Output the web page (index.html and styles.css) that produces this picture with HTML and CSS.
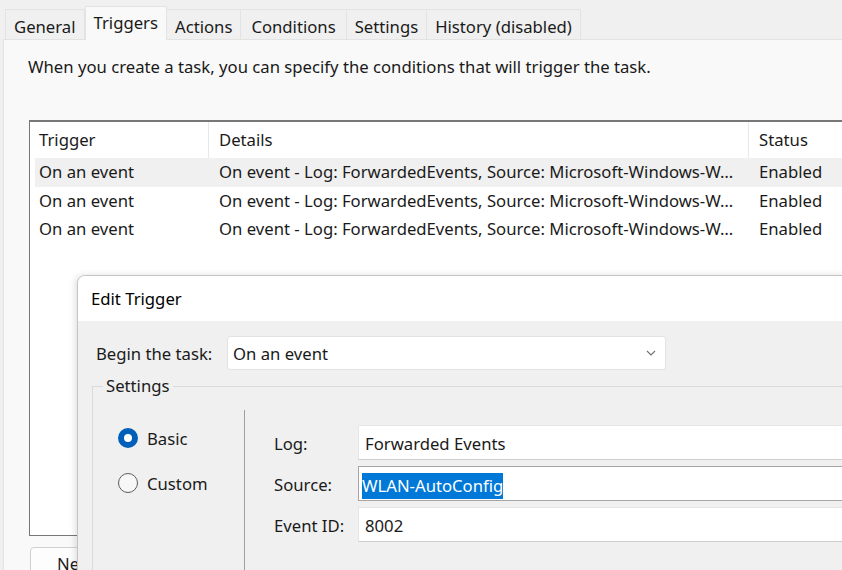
FILE: index.html
```html
<!DOCTYPE html>
<html>
<head>
<meta charset="utf-8">
<link rel="stylesheet" href="styles.css">
</head>
<body>
<div class="tabs">
  <div class="tab">General</div>
  <div class="tab active">Triggers</div>
  <div class="tab">Actions</div>
  <div class="tab wide">Conditions</div>
  <div class="tab">Settings</div>
  <div class="tab">History (disabled)</div>
</div>
<div class="panel">
  <p class="desc">When you create a task, you can specify the conditions that will trigger the task.</p>
  <div class="list">
    <div class="list-head">
      <div class="hc c1">Trigger</div>
      <div class="hc c2">Details</div>
      <div class="hc c3">Status</div>
    </div>
    <div class="row sel">
      <div class="c1">On an event</div>
      <div class="c2">On event - Log: ForwardedEvents, Source: Microsoft-Windows-W…</div>
      <div class="c3">Enabled</div>
    </div>
    <div class="row">
      <div class="c1">On an event</div>
      <div class="c2">On event - Log: ForwardedEvents, Source: Microsoft-Windows-W…</div>
      <div class="c3">Enabled</div>
    </div>
    <div class="row">
      <div class="c1">On an event</div>
      <div class="c2">On event - Log: ForwardedEvents, Source: Microsoft-Windows-W…</div>
      <div class="c3">Enabled</div>
    </div>
  </div>
  <button class="btn">New...</button>
</div>

<div class="dialog">
  <div class="dlg-title">Edit Trigger</div>
  <div class="dlg-body">
    <div class="begin">
      <span class="begin-label">Begin the task:</span>
      <div class="combo">
        <span>On an event</span>
        <svg class="chev" width="10" height="6" viewBox="0 0 10 6"><path d="M1 1 L5 5 L9 1" fill="none" stroke="#707070" stroke-width="1.1"/></svg>
      </div>
    </div>
    <fieldset class="group">
      <legend>Settings</legend>
      <div class="group-inner">
        <div class="radios">
          <label class="radio"><span class="dot on"></span>Basic</label>
          <label class="radio"><span class="dot"></span>Custom</label>
        </div>
        <div class="fields">
          <span class="flabel">Log:</span>
          <div class="input">Forwarded Events</div>
          <span class="flabel">Source:</span>
          <div class="input focus"><span class="hl">WLAN-AutoConfig</span></div>
          <span class="flabel">Event ID:</span>
          <div class="input">8002</div>
        </div>
      </div>
    </fieldset>
  </div>
</div>
</body>
</html>
```
FILE: styles.css
```css
* { box-sizing: border-box; }
html, body {
  margin: 0;
  width: 842px;
  height: 570px;
  overflow: hidden;
}
body {
  background: #f0f0f0;
  font-family: "Noto Sans", "Segoe UI", sans-serif;
  font-size: 16.7px;
  color: #1a1a1a;
  position: relative;
}
.tabs {
  display: flex;
  align-items: flex-end;
  height: 39px;
  padding-left: 5px;
}
.tab {
  height: 30px;
  padding: 3px 8px 0;
  line-height: 27px;
  border: 1px solid #e3e3e3;
  border-bottom: none;
  border-left: none;
  background: #f0f0f0;
  white-space: nowrap;
}
.tab.wide { padding: 3px 10px 0; }
.tab:first-child { border-left: 1px solid #e3e3e3; }
.tab.active {
  height: 34px;
  padding: 0 8px;
  line-height: 32px;
  background: #f9f9f9;
  border-left: 1px solid #e3e3e3;
  margin-bottom: -1px;
  position: relative;
  z-index: 1;
}
.panel {
  margin-left: 3px;
  height: 531px;
  background: #f9f9f9;
  border-top: 1px solid #e3e3e3;
  border-left: 1px solid #e3e3e3;
  padding: 16px 0 0 24px;
}
.desc {
  margin: 0;
  line-height: 22px;
  white-space: nowrap;
}
.list {
  margin: 42px 0 0 1px;
  width: 900px;
  height: 416px;
  background: #fff;
  border-top: 2px solid #777;
  border-left: 1px solid #777;
  border-bottom: 1px solid #777;
}
.list-head, .row {
  display: grid;
  grid-template-columns: 174px 540px 1fr;
  margin-left: 5px;
  white-space: nowrap;
}
.list-head { height: 36px; }
.hc {
  line-height: 36px;
  border-right: 1px solid #e8e8e8;
}
.row { height: 28.6px; line-height: 27px; }
.row.sel { background: #f0f0f0; }
.c1 { padding-left: 4px; }
.c2, .c3 { padding-left: 10px; overflow: hidden; }
.btn {
  margin: 11px 0 0 2px;
  height: 32px;
  padding: 0 26px;
  font: inherit;
  color: #1a1a1a;
  background: #fdfdfd;
  border: 1px solid #d0d0d0;
  border-radius: 4px;
}
.dialog {
  position: absolute;
  left: 77px;
  top: 275px;
  width: 820px;
  height: 330px;
  border: 1px solid #c4c4c4;
  border-radius: 8px 0 0 0;
  background: #f0f0f0;
  box-shadow: -2px 0 6px rgba(0,0,0,0.12);
  overflow: hidden;
}
.dlg-title {
  height: 45px;
  line-height: 45px;
  background: #fff;
  padding-left: 13px;
  color: #000;
}
.dlg-body {
  padding: 15px 0 0 14px;
}
.begin {
  display: flex;
  align-items: center;
  padding-left: 4px;
}
.begin-label { width: 131px; }
.combo {
  width: 439px;
  height: 34px;
  background: #fff;
  border: 1px solid #e2e2e2;
  border-radius: 3px;
  display: flex;
  align-items: center;
  justify-content: space-between;
  padding: 0 9px 0 5px;
}
.group {
  margin: 5px 0 0 0;
  padding: 0;
  width: 800px;
  height: 300px;
  border: 1px solid #dadada;
}
.group legend {
  margin-left: 10px;
  padding: 0 3px;
  line-height: 22px;
}
.group-inner {
  display: flex;
  padding-top: 13px;
}
.radios {
  width: 152px;
  height: 200px;
  border-right: 1px solid #a0a0a0;
  padding: 18px 0 0 25px;
  display: flex;
  flex-direction: column;
  gap: 25px;
}
.radio {
  display: flex;
  align-items: center;
  gap: 9px;
  height: 20px;
}
.dot {
  width: 20px;
  height: 20px;
  border-radius: 50%;
  border: 1px solid #5c5c5c;
  background: #f7f7f7;
}
.dot.on {
  border: 6px solid #005fb8;
  background: #fff;
}
.fields {
  display: grid;
  grid-template-columns: 84px 600px;
  grid-auto-rows: 35px;
  row-gap: 6px;
  padding: 15px 0 0 29px;
  align-items: center;
}
.flabel { padding-top: 2px; }
.input {
  height: 35px;
  background: #fff;
  border: 1px solid #e5e5e5;
  border-bottom-color: #cfcfcf;
  line-height: 35px;
  padding-left: 6px;
}
.input.focus {
  border: 1px solid #a6a6a6;
  padding-left: 3px;
  line-height: 33px;
}
.hl {
  background: #0078d7;
  color: #fff;
  display: inline-block;
  line-height: 26px;
  vertical-align: middle;
}
```
